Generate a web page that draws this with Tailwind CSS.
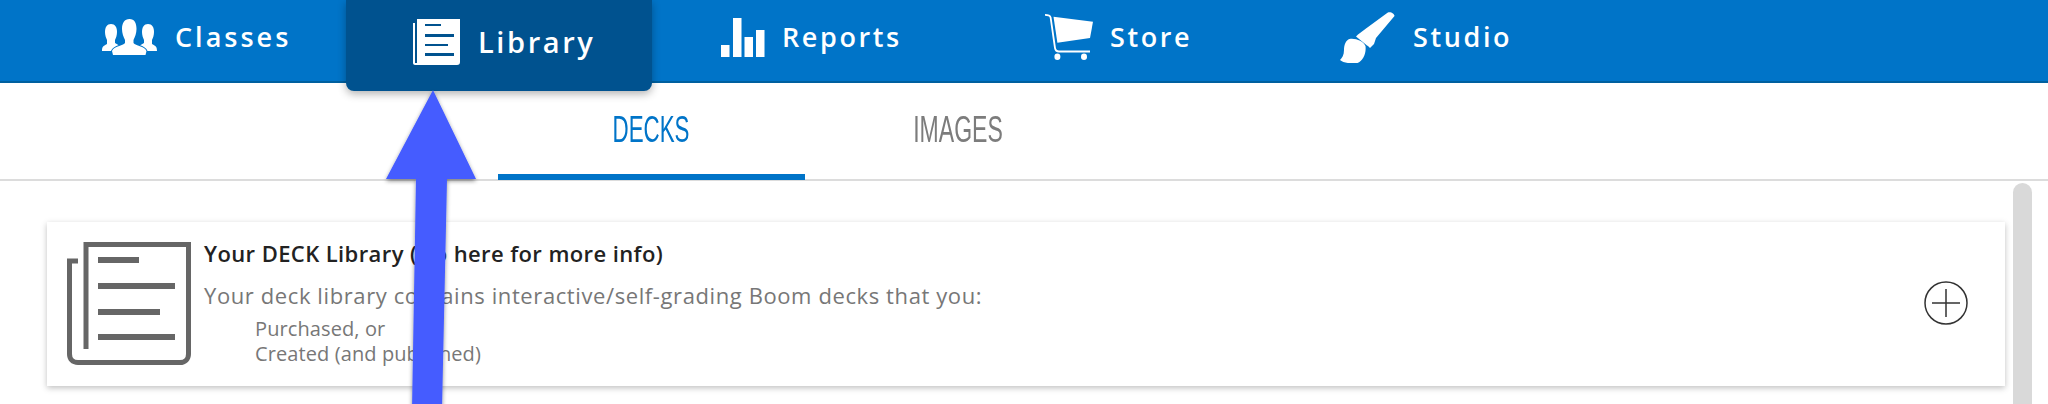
<!DOCTYPE html>
<html lang="en">
<head>
    <meta charset="UTF-8">
    <title>Library</title>
    <script src="https://cdn.jsdelivr.net/npm/@tailwindcss/browser@4"></script>
</head>
<body class="relative h-[404px] overflow-hidden bg-white font-['Open_Sans',sans-serif]">
    <!-- top nav -->
    <nav class="relative flex h-[83px] items-start border-b-2 border-[#00609f] bg-[#0074c8] pl-[102px] text-white">
        <a class="flex h-[81px] w-[244px] items-center gap-[18px] pb-[7px] text-[27px] font-semibold tracking-[3px]">
            <svg class="h-[36px] w-[55px] shrink-0" viewBox="0 0 55 36" fill="white">
                <path d="M9 5c4 0 6 3 6 8 0 3-1 6-2 8v3l5 3-6 3-1 2H0c0-4 1-5 5-7v-4c-1-2-2-5-2-8 0-5 2-8 6-8z"/>
                <path d="M46 5c-4 0-6 3-6 8 0 3 1 6 2 8v3l-5 3 6 3 1 2h11c0-4-1-5-5-7v-4c1-2 2-5 2-8 0-5-2-8-6-8z"/>
                <path stroke="#0074c8" stroke-width="2" paint-order="stroke" d="M27.500 0c5 0 7 4 7 10 0 4-1.500 8-3 11v3c2 3 11 3 13 8l-1 4H11l-1-4c2-5 11-5 13-8v-3c-1.500-3-3-7-3-11 0-6 2.500-10 7.500-10z"/>
            </svg>
            <span>Classes</span>
        </a>
        <a class="relative flex h-[91px] w-[306px] items-center gap-[18px] rounded-b-lg bg-[#00528f] pb-[7px] pl-[67px] text-[29px] font-semibold tracking-[2.6px] shadow-[0_3px_8px_rgba(0,0,0,0.3)]">
            <svg class="h-[46px] w-[47px] shrink-0" viewBox="0 0 47 46" fill="white">
                <path d="M0 4h2v40h42v2H2c-1 0-2-1-2-2z"/>
                <path fill-rule="evenodd" d="M4 0h43v43c0 2-1 3-3 3H4zM12 5v2h16V5zM12 15v3h29v-3zM12 25v2h23v-2zM12 34v3h29v-3z"/>
            </svg>
            <span>Library</span>
        </a>
        <a class="ml-[69px] flex h-[81px] w-[324px] items-center gap-[17px] pb-[7px] text-[27px] font-semibold tracking-[2.6px]">
            <svg class="h-[39px] w-[44px] shrink-0" viewBox="0 0 44 39" fill="white">
                <rect x="0" y="27" width="8.500" height="12"/>
                <rect x="12" y="0" width="8.500" height="39"/>
                <rect x="23.500" y="19" width="8.500" height="20"/>
                <rect x="35" y="12" width="8.500" height="27"/>
            </svg>
            <span>Reports</span>
        </a>
        <a class="flex h-[81px] w-[295px] items-center gap-[17px] pb-[7px] text-[27px] font-semibold tracking-[2.6px]">
            <svg class="h-[46px] w-[48px] shrink-0" viewBox="0 0 48 46" fill="white">
                <path d="M8.500 2.700L48 7.700 45 24 12.400 28.700z"/>
                <path fill="none" stroke="white" stroke-width="1.800" d="M0 .9c3 0 5 .5 5.600 2.500L10 34c.4 2.500 2 3.500 4 3.500H45"/>
                <ellipse cx="12.400" cy="42.700" rx="3" ry="3.300"/>
                <ellipse cx="39" cy="42.700" rx="3" ry="3.300"/>
            </svg>
            <span>Store</span>
        </a>
        <a class="flex h-[81px] items-center gap-[16px] pb-[7px] text-[27px] font-semibold tracking-[2.6px]">
            <svg class="h-[51px] w-[57px] shrink-0" viewBox="0 0 57 51" fill="white">
                <path d="M47.500 .7c3-1.500 7 1 7 3.300L36 26l-2 6-4 4-2-2-1-.5-11-9 2-2 8-6z"/>
                <path d="M9.500 27c6-1 14 2 16 7 1 8-3 15-8 17-6 1-14 0-17.500-3 2-2 4-5 4-10 0-5 2-10 5.500-11z"/>
            </svg>
            <span>Studio</span>
        </a>
    </nav>

    <!-- deck / image tabs -->
    <div class="flex h-[98px] items-stretch border-b-2 border-[#dcdcdc] pl-[498px] pr-[13px] font-['Liberation_Sans',sans-serif] text-[36px]">
        <div class="-mb-[1px] flex w-[307px] items-center justify-center border-b-[6px] border-[#0074c8] pt-[3px] text-[#0074c8]">
            <span class="inline-block scale-x-[0.62]">DECKS</span>
        </div>
        <div class="flex w-[307px] items-center justify-center pb-[2px] text-[#7c7c7c]">
            <span class="inline-block scale-x-[0.64]">IMAGES</span>
        </div>
    </div>

    <div class="flex items-start pl-[47px] pr-[15px]">
        <!-- info card -->
        <div class="mt-[41px] flex h-[164px] w-[1958px] items-start bg-white pl-[20px] pt-[20px] shadow-[0_2px_6px_rgba(0,0,0,0.25)]">
            <svg class="h-[123px] w-[124px] shrink-0" viewBox="0 0 124 123" fill="none" stroke="#666666" stroke-width="5">
                <path d="M11 19H2.500v93c0 5 3 8.500 8.500 8.500h102c5 0 8.500-3.500 8.500-8.500V2.500H19V107" />
                <path stroke-width="6" d="M31 18h41M31 44h77M31 70h62M31 95h77" />
            </svg>
            <div class="ml-[13px] flex-1">
                <p class="text-[22px] font-semibold leading-[22px] tracking-[0.4px] text-[#222222]">Your DECK Library (Go here for more info)</p>
                <p class="mt-[19px] text-[22px] leading-[24px] tracking-[0.6px] text-[#777777]">Your deck library contains interactive/self-grading Boom decks that you:</p>
                <ul class="mt-[9px] pl-[51px] text-[20px] leading-[25px] tracking-[0.1px] text-[#777777]">
                    <li>Purchased, or</li>
                    <li>Created (and published)</li>
                </ul>
            </div>
            <svg class="mr-[37px] mt-[39px] h-[44px] w-[44px] shrink-0" viewBox="0 0 44 44" fill="none" stroke="#333333" stroke-width="1.500">
                <circle cx="22" cy="22" r="21"/>
                <path d="M22 8v28M8 22h28"/>
            </svg>
        </div>
        <!-- scrollbar -->
        <div class="ml-[8px] mt-[2px] h-[221px] w-[19px] rounded-t-[10px] bg-[#d9d9d9]"></div>
    </div>

    <!-- annotation arrow over the page -->
    <svg class="absolute left-0 top-0 h-[404px] w-[2048px]" viewBox="0 0 2048 404">
        <defs>
            <filter id="arrowShadow" x="-30%" y="-10%" width="160%" height="120%">
                <feDropShadow dx="0" dy="2" stdDeviation="2" flood-color="#000000" flood-opacity="0.45"/>
            </filter>
        </defs>
        <path filter="url(#arrowShadow)" fill="#445cff" d="M433 90L476 179H447L442 410H412L416 179H386Z"/>
    </svg>
</body>
</html>
